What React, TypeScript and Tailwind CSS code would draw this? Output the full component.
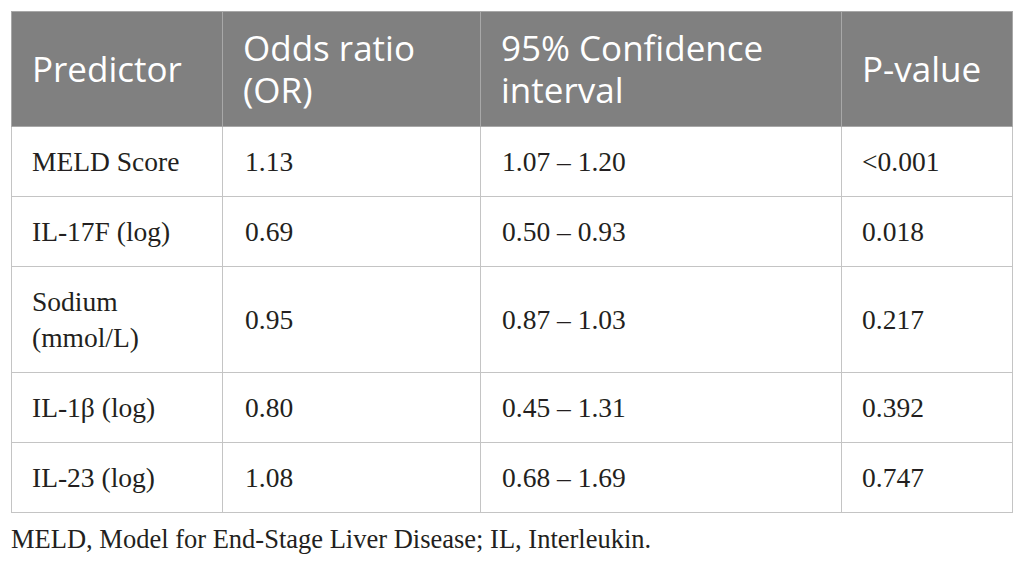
export default function App() {
  const rows = [
    { name: "MELD Score", or: "1.13", ci: "1.07 – 1.20", p: "<0.001" },
    { name: "IL-17F (log)", or: "0.69", ci: "0.50 – 0.93", p: "0.018" },
    { name: "Sodium (mmol/L)", or: "0.95", ci: "0.87 – 1.03", p: "0.217" },
    { name: "IL-1β (log)", or: "0.80", ci: "0.45 – 1.31", p: "0.392" },
    { name: "IL-23 (log)", or: "1.08", ci: "0.68 – 1.69", p: "0.747" },
  ];

  return (
    <div className="w-[1026px] h-[565px] bg-white pt-[11px] pl-[11px]">
      <table className="w-[1001px] border-collapse table-fixed border border-[#c4c4c4]">
        <colgroup>
          <col className="w-[211px]" />
          <col className="w-[258px]" />
          <col className="w-[361px]" />
          <col className="w-[171px]" />
        </colgroup>
        <thead>
          <tr className="bg-[#808080] text-white text-[35px] leading-[42px] font-['Open_Sans',sans-serif]">
            <th className="text-left font-normal px-[20px] py-[15px] border border-[#a8a8a8]">Predictor</th>
            <th className="text-left font-normal px-[20px] py-[15px] border border-[#a8a8a8]">
              <div>Odds ratio</div>
              <div>(OR)</div>
            </th>
            <th className="text-left font-normal px-[20px] py-[15px] border border-[#a8a8a8]">
              <div>95% Confidence</div>
              <div>interval</div>
            </th>
            <th className="text-left font-normal px-[20px] py-[15px] border border-[#a8a8a8]">P-value</th>
          </tr>
        </thead>
        <tbody className="text-[#231f20] text-[27.5px] leading-[36px] font-['Liberation_Serif',serif]">
          {rows.map((r) => (
            <tr key={r.name}>
              <td className="px-[20px] py-[16.5px] border border-[#c4c4c4] align-middle">{r.name}</td>
              <td className="px-[22px] py-[16.5px] border border-[#c4c4c4] align-middle">{r.or}</td>
              <td className="px-[21px] py-[16.5px] border border-[#c4c4c4] align-middle">{r.ci}</td>
              <td className="px-[20px] py-[16.5px] border border-[#c4c4c4] align-middle">{r.p}</td>
            </tr>
          ))}
        </tbody>
      </table>
      <p className="mt-[8px] text-[26.5px] leading-[36px] text-[#231f20] font-['Liberation_Serif',serif]">
        MELD, Model for End-Stage Liver Disease; IL, Interleukin.
      </p>
    </div>
  );
}
